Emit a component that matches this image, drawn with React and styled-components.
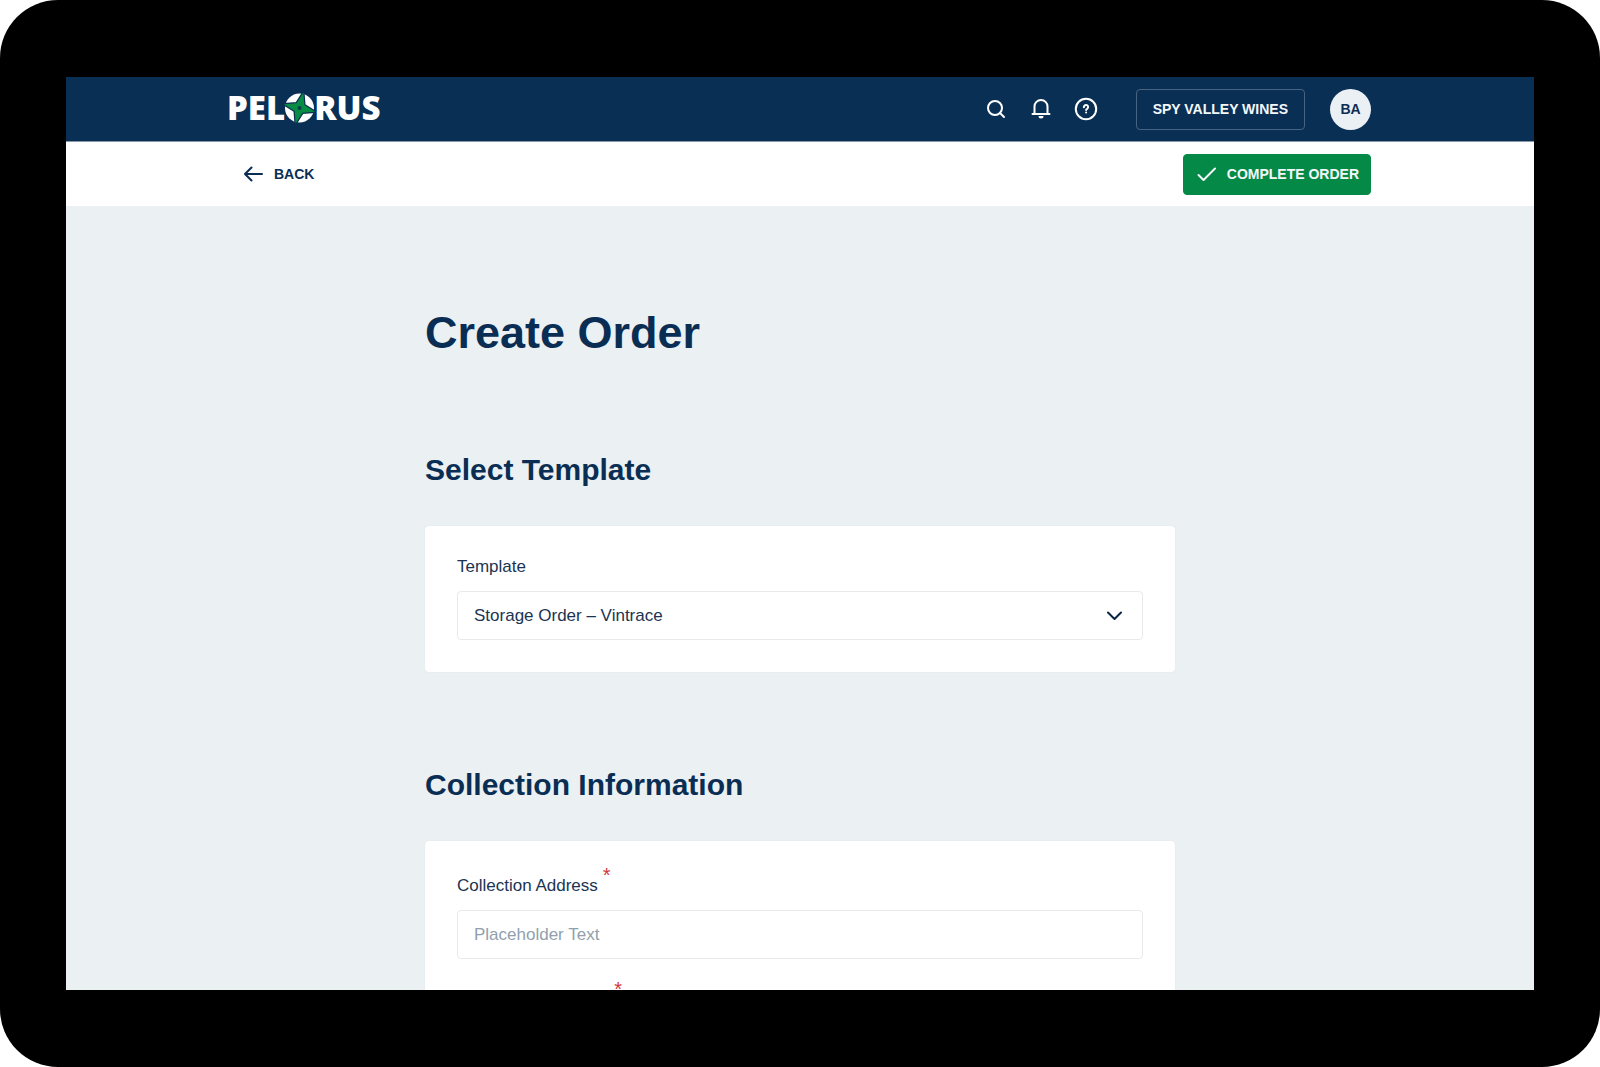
import React from "react";
import styled, { createGlobalStyle } from "styled-components";

const GlobalStyle = createGlobalStyle`
  * {
    box-sizing: border-box;
  }
  body {
    margin: 0;
    background: #ffffff;
    color: #0a2e53;
    font-family: "Liberation Sans", Arial, sans-serif;
  }
`;

const Device = styled.div`
  display: flex;
  height: 100vh;
  padding: 77px 66px;
  border-radius: 58px;
  background: #000000;
`;

const Screen = styled.div`
  display: flex;
  flex-direction: column;
  flex: 1;
  min-width: 0;
  overflow: hidden;
  background: #ebf0f3;
`;

const Header = styled.header`
  flex-shrink: 0;
  background: #0a2f54;
  border-bottom: 1px solid #8797aa;
`;

const Toolbar = styled.div`
  flex-shrink: 0;
  background: #ffffff;
`;

const Container = styled.div`
  display: flex;
  align-items: center;
  justify-content: space-between;
  width: 100%;
  max-width: 1142px;
  height: 64px;
  margin: 0 auto;
`;

const Logo = styled.a`
  display: flex;
  align-items: center;
  padding-bottom: 3px;
  margin-left: -2px;
  color: #ffffff;
  font-family: "Open Sans", sans-serif;
  font-size: 33px;
  font-weight: 800;
  line-height: 40px;
  text-decoration: none;
`;

const CompassMark = styled.svg`
  margin: 0 -1px;
`;

const Actions = styled.div`
  display: flex;
  align-items: center;
  gap: 25px;
`;

const IconGroup = styled.div`
  display: flex;
  gap: 21px;
  margin-right: 13px;
`;

const IconButton = styled.button`
  display: flex;
  padding: 0;
  border: 0;
  background: none;
  color: #ffffff;
  cursor: pointer;
`;

const Button = styled.button`
  display: flex;
  align-items: center;
  gap: 8px;
  height: 41px;
  padding: 0 ${({ $primary }) => ($primary ? "11px" : "16px")};
  border: 1px solid ${({ $primary }) => ($primary ? "#048a46" : "#47637f")};
  border-radius: 4px;
  background: ${({ $primary }) => ($primary ? "#048a46" : "transparent")};
  color: #f4f8fa;
  font-family: inherit;
  font-size: 14px;
  font-weight: 700;
  cursor: pointer;
`;

const Avatar = styled.button`
  width: 41px;
  height: 41px;
  padding: 0;
  border: 0;
  border-radius: 50%;
  background: #ebf0f5;
  color: #0a2e53;
  font-family: inherit;
  font-size: 14px;
  font-weight: 700;
  cursor: pointer;
`;

const BackLink = styled.a`
  display: flex;
  align-items: center;
  gap: 8px;
  padding-left: 13px;
  color: #0a2e53;
  font-size: 14px;
  font-weight: 700;
  text-decoration: none;
`;

const Content = styled.main`
  flex: 1;
  min-height: 0;
  overflow: hidden;
  padding-top: 99px;
`;

const Form = styled.form`
  width: 100%;
  max-width: 750px;
  margin: 0 auto;
`;

const Title = styled.h1`
  margin: 0 0 89px;
  font-size: 45px;
  line-height: 56px;
`;

const Section = styled.section`
  margin-bottom: 93px;
`;

const SectionTitle = styled.h2`
  margin: 0 0 36px;
  font-size: 30px;
  line-height: 40px;
`;

const Card = styled.div`
  display: flex;
  flex-direction: column;
  gap: 26px;
  padding: 30px 32px 32px;
  border-radius: 4px;
  background: #ffffff;
  box-shadow: 0 0 1px #ccd6dd;
`;

const Field = styled.div`
  display: flex;
  flex-direction: column;
  gap: 13px;
`;

const Label = styled.label`
  display: flex;
  align-items: flex-end;
  gap: 5px;
  height: ${({ $required }) => ($required ? "26px" : "22px")};
  color: #1b3452;
  font-size: 17px;
  line-height: 22px;
`;

const Asterisk = styled.span`
  align-self: flex-start;
  color: #d0373f;
  font-size: 20px;
  line-height: 8px;
`;

const Control = styled.div`
  position: relative;
`;

const Input = styled.input`
  display: block;
  width: 100%;
  height: 49px;
  padding: 0 16px;
  border: 1px solid #e7eaed;
  border-radius: 4px;
  background: #ffffff;
  color: #1b3452;
  font-family: inherit;
  font-size: 17px;

  &::placeholder {
    color: #919fae;
    opacity: 1;
  }
`;

const Select = styled(Input)`
  appearance: none;
  cursor: pointer;
`;

const Chevron = styled.svg`
  position: absolute;
  top: 50%;
  right: 16px;
  transform: translateY(-50%);
  pointer-events: none;
`;

function Icon({ children }) {
  return (
    <svg
      width="24"
      height="24"
      viewBox="0 0 24 24"
      fill="none"
      stroke="currentColor"
      strokeWidth="2"
      strokeLinecap="round"
      strokeLinejoin="round"
      aria-hidden="true"
    >
      {children}
    </svg>
  );
}

function Compass() {
  const star =
    "M0 -16 L4 -4 L16 0 L4 4 L0 16 L-4 4 L-16 0 L-4 -4 Z";
  return (
    <CompassMark
      width="31"
      height="32"
      viewBox="-15.5 -16 31 32"
      overflow="visible"
      aria-hidden="true"
    >
      <circle r="14.5" fill="#ffffff" />
      <g transform="rotate(14)">
        <path
          d={star}
          fill="#0a2f54"
          stroke="#0a2f54"
          strokeWidth="2.4"
          strokeLinejoin="round"
        />
        <path d={star} fill="#078c43" />
      </g>
      <circle r="2" fill="#0a3f49" />
    </CompassMark>
  );
}

function TextField({ id, label, placeholder }) {
  return (
    <Field>
      <Label htmlFor={id} $required>
        {label}
        <Asterisk>*</Asterisk>
      </Label>
      <Input id={id} type="text" placeholder={placeholder} required />
    </Field>
  );
}

function TopBar() {
  return (
    <Header>
      <Container>
        <Logo href="#" aria-label="Pelorus">
          <span>PEL</span>
          <Compass />
          <span>RUS</span>
        </Logo>
        <Actions>
          <IconGroup>
            <IconButton type="button" aria-label="Search">
              <Icon>
                <circle cx="11" cy="11" r="7" />
                <path d="M16 16l4 4" />
              </Icon>
            </IconButton>
            <IconButton type="button" aria-label="Notifications">
              <Icon>
                <path d="M3.5 17h17M5.5 17V9.5a6.5 6.5 0 0 1 13 0V17" />
                <path
                  d="M9.5 19h5a2.5 2.5 0 0 1-5 0z"
                  fill="currentColor"
                  stroke="none"
                />
              </Icon>
            </IconButton>
            <IconButton type="button" aria-label="Help">
              <Icon>
                <circle cx="12" cy="12" r="10.2" />
                <path d="M9.9 10.2a2.1 2.1 0 1 1 3.3 1.6c-.8.5-1.1.8-1.1 1.3" />
                <path d="M12.1 15.6h.01" />
              </Icon>
            </IconButton>
          </IconGroup>
          <Button type="button">SPY VALLEY WINES</Button>
          <Avatar type="button">BA</Avatar>
        </Actions>
      </Container>
    </Header>
  );
}

export default function App() {
  return (
    <>
      <GlobalStyle />
      <Device>
        <Screen>
          <TopBar />
          <Toolbar>
            <Container>
              <BackLink href="#">
                <Icon>
                  <path d="M20 12H3.5M9.5 5.5L3 12l6.5 6.5" />
                </Icon>
                BACK
              </BackLink>
              <Button type="submit" form="order" $primary>
                <Icon>
                  <path d="M3.5 13l5 5L20 6.5" />
                </Icon>
                COMPLETE ORDER
              </Button>
            </Container>
          </Toolbar>
          <Content>
            <Form id="order">
              <Title>Create Order</Title>
              <Section>
                <SectionTitle>Select Template</SectionTitle>
                <Card>
                  <Field>
                    <Label htmlFor="template">Template</Label>
                    <Control>
                      <Select as="select" id="template">
                        <option>Storage Order – Vintrace</option>
                      </Select>
                      <Chevron
                        width="24"
                        height="24"
                        viewBox="0 0 24 24"
                        fill="none"
                        stroke="#0a2342"
                        strokeWidth="2"
                        strokeLinecap="round"
                        strokeLinejoin="round"
                        aria-hidden="true"
                      >
                        <path d="M5 8.5l6.5 6.5L18 8.5" />
                      </Chevron>
                    </Control>
                  </Field>
                </Card>
              </Section>
              <Section>
                <SectionTitle>Collection Information</SectionTitle>
                <Card>
                  <TextField
                    id="address"
                    label="Collection Address"
                    placeholder="Placeholder Text"
                  />
                  <TextField
                    id="company"
                    label="Collection Company"
                    placeholder="Placeholder Text"
                  />
                </Card>
              </Section>
            </Form>
          </Content>
        </Screen>
      </Device>
    </>
  );
}
